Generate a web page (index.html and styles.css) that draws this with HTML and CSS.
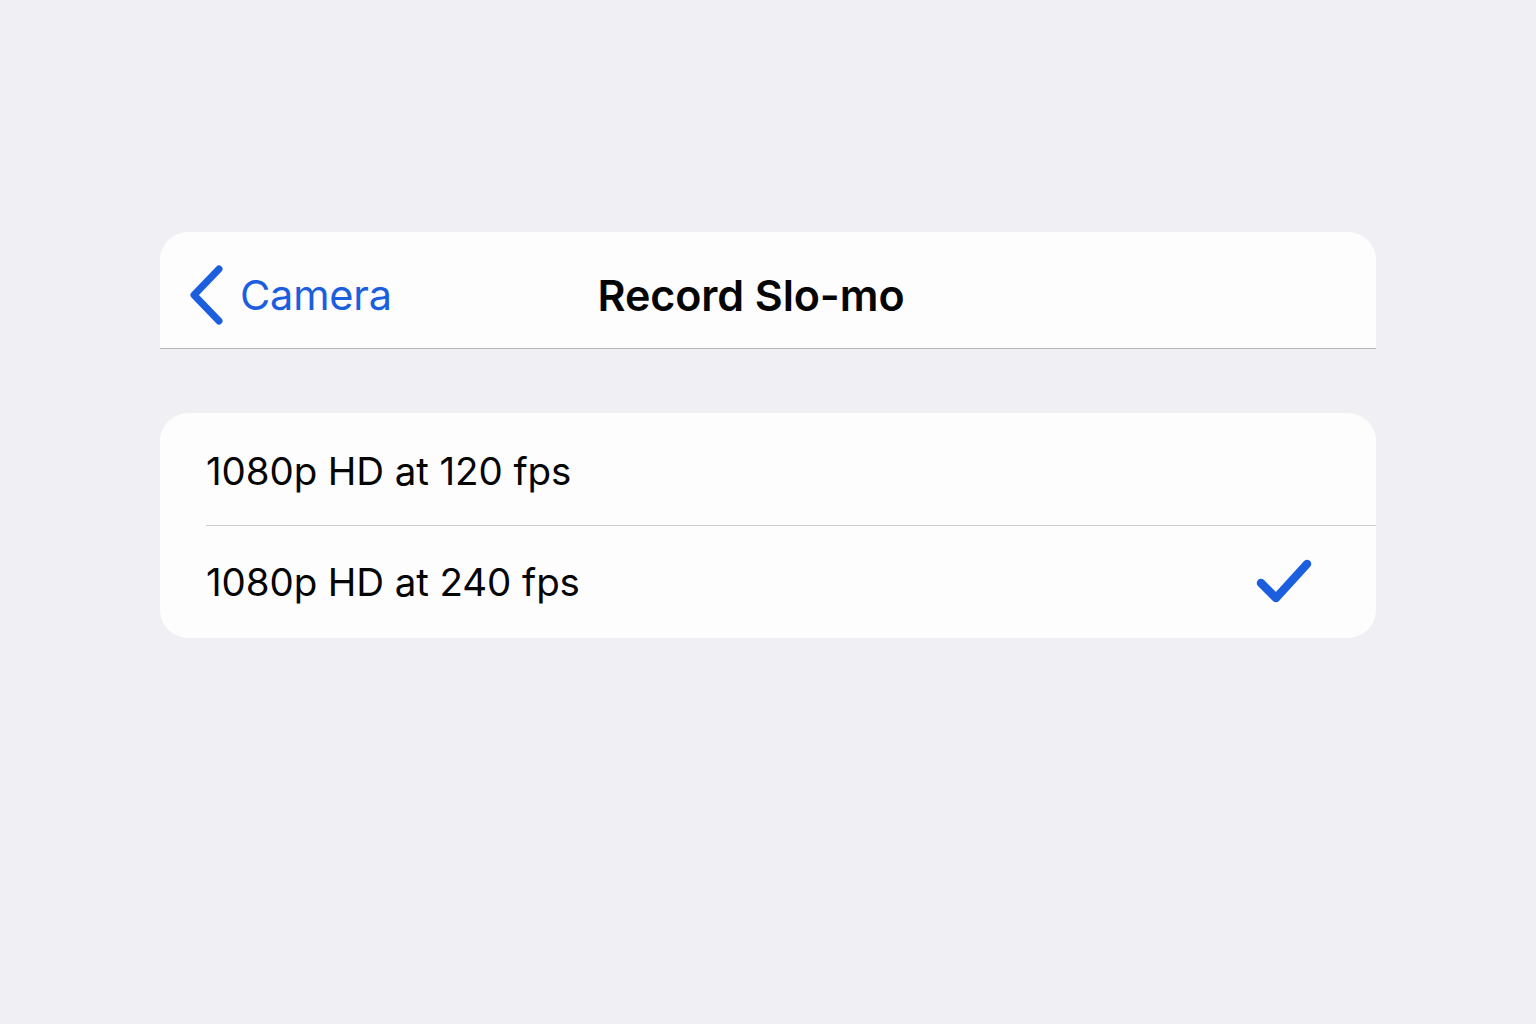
FILE: index.html
```html
<!DOCTYPE html>
<html lang="en">
<head>
<meta charset="utf-8">
<title>Record Slo-mo</title>
<link rel="stylesheet" href="styles.css">
</head>
<body>
<main class="screen">
  <header class="navbar">
    <a class="back" href="#">
      <svg class="chevron" viewBox="0 0 36 62" aria-hidden="true">
        <path d="M31 5 L6 31 L31 57" fill="none" stroke="currentColor" stroke-width="7" stroke-linecap="round" stroke-linejoin="round"/>
      </svg>
      <span class="back-label">Camera</span>
    </a>
    <h1 class="title">Record Slo-mo</h1>
  </header>

  <ul class="options">
    <li class="option">
      <span class="option-label">1080p HD at 120 fps</span>
    </li>
    <li class="option selected">
      <span class="option-label">1080p HD at 240 fps</span>
      <svg class="check" viewBox="0 0 56 46" aria-hidden="true">
        <path d="M5 25 L20 40 L51 6" fill="none" stroke="currentColor" stroke-width="8.5" stroke-linecap="round" stroke-linejoin="round"/>
      </svg>
    </li>
  </ul>
</main>
</body>
</html>
```

FILE: styles.css
```css
* {
  box-sizing: border-box;
}

html, body {
  margin: 0;
  height: 100%;
}

body {
  background: #efeff4;
  font-family: Inter, "Noto Sans", "Liberation Sans", sans-serif;
  color: #050505;
}

.screen {
  width: 1216px;
  margin: 0 auto;
  padding-top: 232px;
  display: flex;
  flex-direction: column;
  gap: 64px;
}

/* Navigation bar */
.navbar {
  position: relative;
  height: 117px;
  padding-top: 9px;
  background: #fdfdfe;
  border-radius: 28px 28px 0 0;
  border-bottom: 1px solid #b4b4bb;
  display: flex;
  align-items: center;
  justify-content: center;
}

.back {
  position: absolute;
  left: 28px;
  top: 9px;
  bottom: 0;
  display: flex;
  align-items: center;
  gap: 16px;
  color: #1b5fde;
  text-decoration: none;
}

.chevron {
  width: 36px;
  height: 62px;
  margin-top: 1px;
}

.back-label {
  font-size: 41.5px;
  font-weight: 400;
  letter-spacing: -0.2px;
}

.title {
  margin: 0 0 0 -34px;
  font-size: 43px;
  font-weight: 600;
  letter-spacing: -0.1px;
  color: #050505;
}

/* Option list */
.options {
  list-style: none;
  margin: 0;
  padding: 0 0 0 46px;
  background: #fdfdfe;
  border-radius: 28px;
}

.option {
  height: 112px;
  padding-top: 4px;
  display: flex;
  align-items: center;
  justify-content: space-between;
  padding-right: 64px;
}

.option + .option {
  height: 113px;
  padding-top: 0;
  border-top: 1px solid #cfcfd3;
}

.option-label {
  font-size: 38.5px;
  font-weight: 400;
  letter-spacing: -0.1px;
}

.check {
  width: 56px;
  height: 46px;
  color: #1b5fde;
  margin-top: -3px;
}
```
